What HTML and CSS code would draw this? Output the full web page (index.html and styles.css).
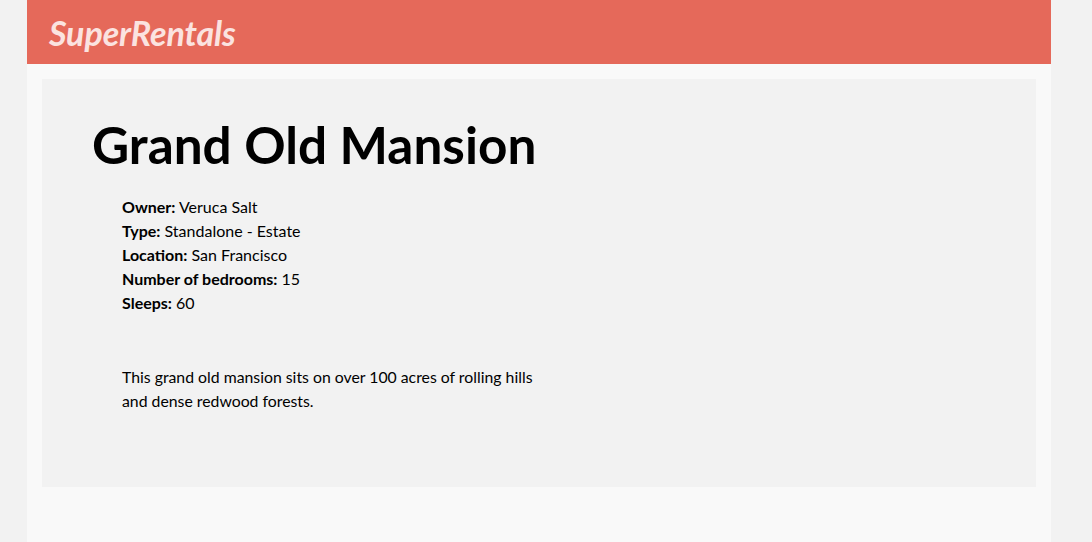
FILE: index.html
```html
<!DOCTYPE html>
<html>
<head>
<meta charset="utf-8">
<link rel="stylesheet" href="styles.css">
</head>
<body>
<div class="container">
  <header class="menu">
    <h1 class="logo">SuperRentals</h1>
  </header>
  <main class="body">
    <article class="rental">
      <h2 class="title">Grand Old Mansion</h2>
      <div class="details">
        <div><strong>Owner:</strong> Veruca Salt</div>
        <div><strong>Type:</strong> Standalone - Estate</div>
        <div><strong>Location:</strong> San Francisco</div>
        <div><strong>Number of bedrooms:</strong> 15</div>
        <div><strong>Sleeps:</strong> 60</div>
      </div>
      <p class="description">This grand old mansion sits on over 100 acres of rolling hills and dense redwood forests.</p>
    </article>
  </main>
</div>
</body>
</html>
```

FILE: styles.css
```css
html, body {
  margin: 0;
  padding: 0;
  background: #f2f2f2;
  font-family: Lato, "Open Sans", sans-serif;
  color: #000;
}
.container {
  width: 1024px;
  margin-left: 27px;
  background: #f9f9f9;
  min-height: 542px;
}
.menu {
  height: 64px;
  background: #e5695a;
  display: flex;
  align-items: center;
  padding-left: 22px;
}
.logo {
  margin: 0;
  font-size: 34px;
  font-weight: 700;
  font-style: italic;
  color: #fbe3e0;
  letter-spacing: -0.1px;
}
.body {
  padding: 15px;
}
.rental {
  background: #f2f2f2;
  height: 408px;
  box-sizing: border-box;
  padding: 30px 50px;
}
.title {
  margin: 0;
  font-size: 51.3px;
  font-weight: 700;
  line-height: 70px;
}
.details {
  margin-top: 16px;
  padding-left: 30px;
  font-size: 16px;
  line-height: 24px;
}
.details strong { font-weight: 700; }
.description {
  margin: 50px 0 0 30px;
  width: 430px;
  font-size: 15.8px;
  line-height: 24px;
}
```
